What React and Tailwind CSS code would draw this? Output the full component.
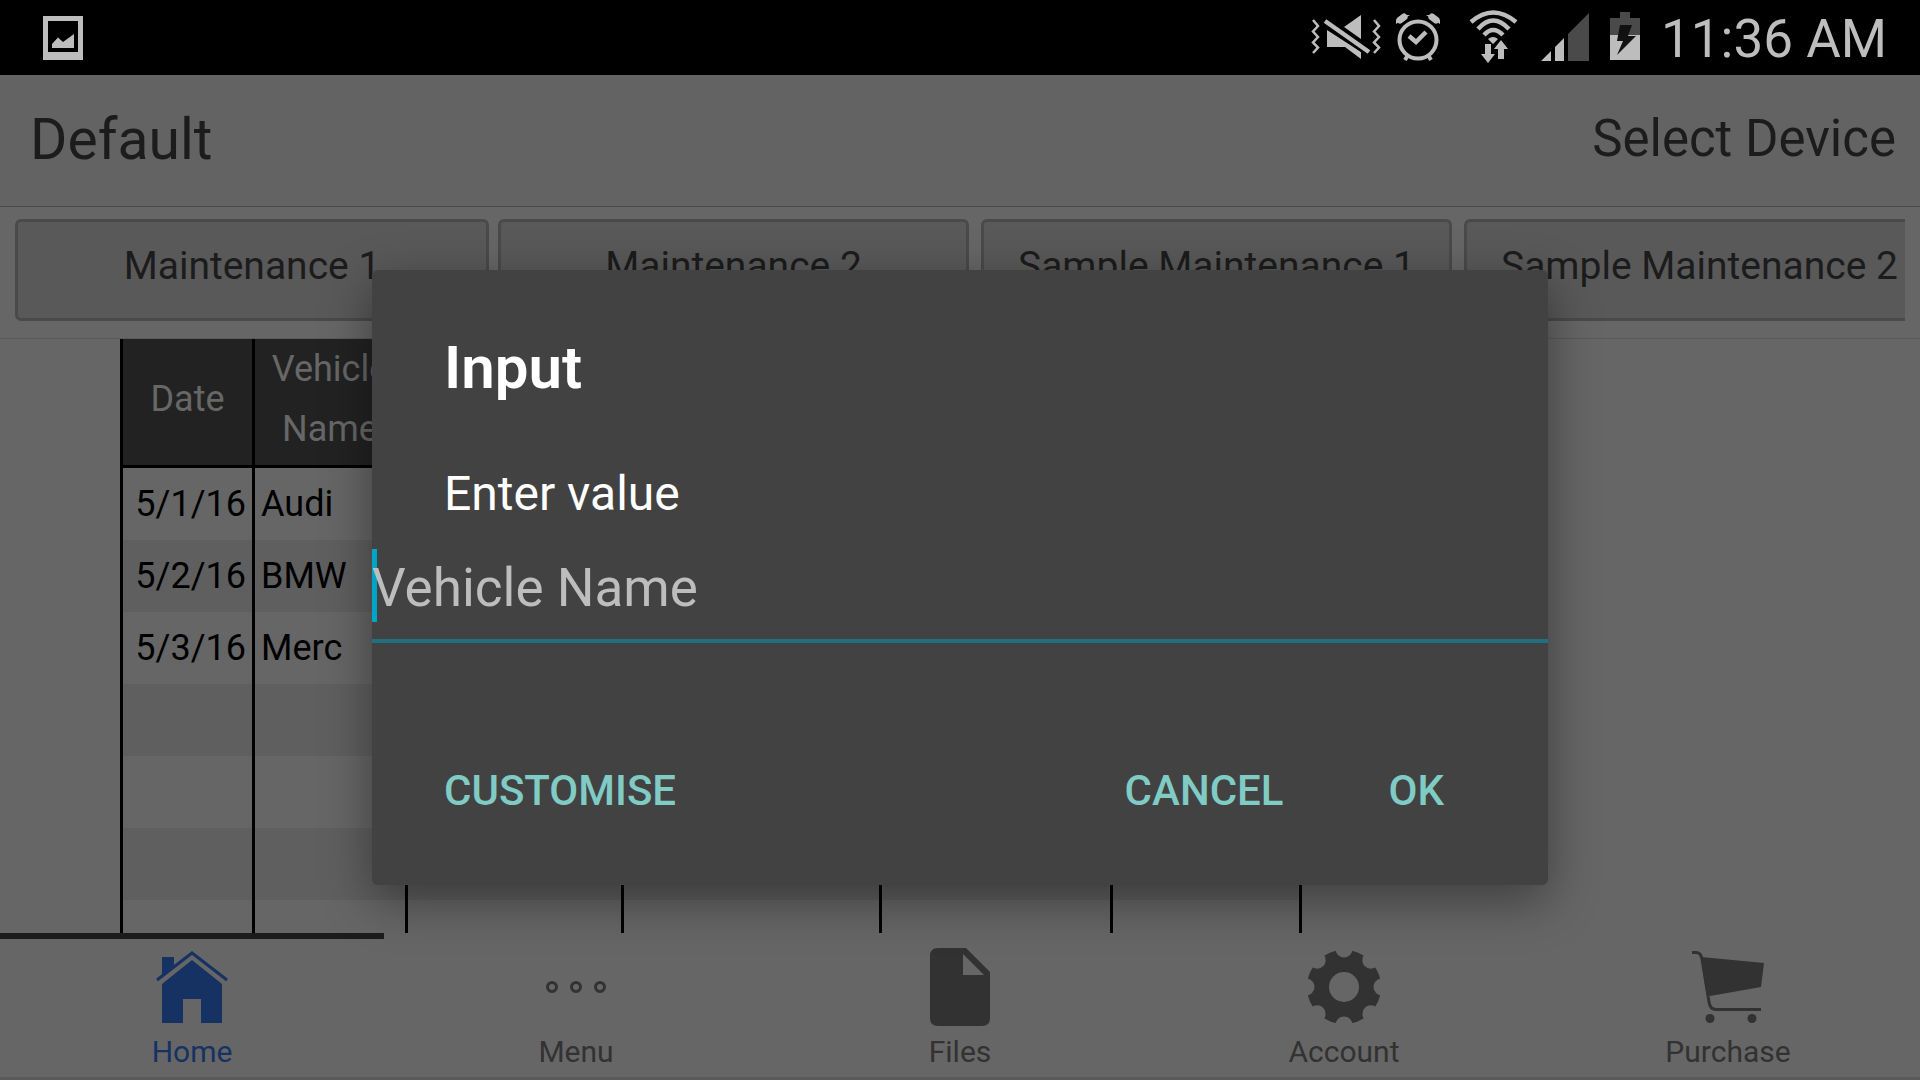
import { useState } from "react";

const BUTTONS = [
  { label: "Maintenance 1", size: "w-[474px] mr-[9px]" },
  { label: "Maintenance 2", size: "w-[471px] mr-3" },
  { label: "Sample Maintenance 1", size: "w-[471px] mr-3" },
  { label: "Sample Maintenance 2", size: "w-[471px] mr-3" },
];

const COLUMNS = [
  { title: "Date", width: "w-[132px]" },
  { title: "Vehicle Name", width: "w-[153px]" },
  { title: "", width: "w-[216px]" },
  { title: "", width: "w-[258px]" },
  { title: "", width: "w-[231px]" },
  { title: "", width: "w-[189px]" },
];

const ROWS = [
  ["5/1/16", "Audi"],
  ["5/2/16", "BMW"],
  ["5/3/16", "Merc"],
  [],
  [],
  [],
  [],
];

function StatusBar() {
  return (
    <div className="flex h-[75px] shrink-0 items-center justify-between bg-black pr-[33px] pl-[43px] text-[#bdbdbd]">
      <svg className="h-11 w-10" viewBox="0 0 40 44" fill="currentColor">
        <path fillRule="evenodd" d="M0 0H40V44H0ZM5 5V36H35V5Z" />
        <path d="M9 28L15 21.500L20 26L31 18V32H9Z" />
      </svg>
      <div className="flex items-center">
        <svg className="h-[75px] w-[345px]" viewBox="1305 0 345 75" fill="none">
          {/* muted, vibrating */}
          <g stroke="#bdbdbd" strokeWidth="2.500">
            <path d="M1314 20L1319 26L1314 31.500L1319 37L1314 42.500L1319 47.500L1314 53" />
            <path d="M1375 20L1380 26L1375 31.500L1380 37L1375 42.500L1380 47.500L1375 53" />
          </g>
          <path fill="#bdbdbd" d="M1345 27L1362 15V39ZM1328 30L1362 52V59L1346 47H1328Z" />
          <path d="M1326 21L1370 52" stroke="#000" strokeWidth="9" />
          <path d="M1326 21L1370 52" stroke="#bdbdbd" strokeWidth="4.500" />
          {/* alarm */}
          <circle cx="1419" cy="40" r="18.500" stroke="#bdbdbd" strokeWidth="4" />
          <path d="M1410 36L1417 42L1427 32" stroke="#bdbdbd" strokeWidth="4.500" />
          <path d="M1401 20L1405 17M1437 20L1433 17" stroke="#bdbdbd" strokeWidth="7" strokeLinecap="round" />
          <path d="M1397 20V24L1411 15H1404ZM1441 20V24L1427 15H1434Z" fill="#bdbdbd" />
          <path d="M1409 55L1406 60M1429 55L1432 60" stroke="#bdbdbd" strokeWidth="4" />
          {/* wifi */}
          <g stroke="#bdbdbd" strokeWidth="4.500">
            <path d="M1472 22Q1494 3 1517 22" />
            <path d="M1479 29Q1494 12 1510 29" />
            <path d="M1485 35Q1494 25 1504 35" />
          </g>
          <path fill="#bdbdbd" d="M1489 39Q1494 35 1499 39L1494 44ZM1486 44H1492V54H1496L1489 63L1482 54H1486ZM1499 59V49H1495L1502 40L1509 49H1505V59Z" />
          {/* signal */}
          <path fill="#bdbdbd" d="M1542 61L1552 51V61ZM1556 61V47L1565 38V61Z" />
          <path fill="#4a4a4a" d="M1569 61V34L1590 13V61Z" />
          {/* battery */}
          <path fill="#4a4a4a" d="M1611 35V18H1621V12H1631V18H1641V35Z" />
          <path fill="#bdbdbd" d="M1611 35H1641V60H1611Z" />
          <path fill="#111" d="M1621 25H1633L1629 36H1637L1618 55L1624 41H1618Z" />
        </svg>
        <span className="ml-3 pt-1 text-[53px] leading-[75px]">11:36 AM</span>
      </div>
    </div>
  );
}

function HomeIcon() {
  return (
    <svg className="h-[72px] w-[72px]" viewBox="0 0 72 72" fill="currentColor">
      <path d="M6 6H18V15L6 27Z" />
      <path d="M1 29L36 2L71 29" fill="none" stroke="currentColor" strokeWidth="3" />
      <path d="M36 9L66 33V72H45V48H27V72H6V33Z" />
    </svg>
  );
}

function MenuIcon() {
  return (
    <svg className="h-[72px] w-[72px]" viewBox="0 0 72 72" fill="none" stroke="currentColor" strokeWidth="3">
      <circle cx="12" cy="36" r="4.500" />
      <circle cx="36" cy="36" r="4.500" />
      <circle cx="60" cy="36" r="4.500" />
    </svg>
  );
}

function FilesIcon() {
  return (
    <svg className="h-[78px] w-[60px]" viewBox="0 0 60 78" fill="currentColor">
      <path fillRule="evenodd" d="M8 0H36L60 24V70Q60 78 52 78H8Q0 78 0 70V8Q0 0 8 0ZM33 6V27H54Z" />
    </svg>
  );
}

function GearIcon() {
  const notches = [0, 45, 90, 135, 180, 225, 270, 315];
  return (
    <svg className="h-[72px] w-[72px]" viewBox="0 0 72 72">
      <mask id="gear">
        <circle cx="36" cy="36" r="37" fill="white" />
        <circle cx="36" cy="36" r="15" fill="black" />
        {notches.map((angle) => (
          <circle key={angle} cx="36" cy="-2" r="8.500" fill="black" transform={`rotate(${angle} 36 36)`} />
        ))}
      </mask>
      <rect width="72" height="72" fill="currentColor" mask="url(#gear)" />
    </svg>
  );
}

function CartIcon() {
  return (
    <svg className="h-[72px] w-[72px]" viewBox="0 0 72 72" fill="currentColor">
      <path d="M0 1.500H4Q9 1.500 10 8L17 51Q18 58.500 24 58.500H69" fill="none" stroke="currentColor" strokeWidth="3" />
      <path d="M9 6L72 12L69 36L18 45L14 40Z" />
      <circle cx="18" cy="67.500" r="4.500" />
      <circle cx="60" cy="67.500" r="4.500" />
    </svg>
  );
}

const TABS = [
  { label: "Home", Icon: HomeIcon },
  { label: "Menu", Icon: MenuIcon },
  { label: "Files", Icon: FilesIcon },
  { label: "Account", Icon: GearIcon },
  { label: "Purchase", Icon: CartIcon },
];

function VehicleTable() {
  return (
    <table className="ml-[120px] table-fixed border-separate border-spacing-0 border-l-[3px] border-black text-4xl">
      <thead>
        <tr className="h-[129px] bg-[#222222] text-[#676767]">
          {COLUMNS.map((column, index) => (
            <th
              key={index}
              scope="col"
              className={`${column.width} border-r-[3px] border-b-[3px] border-black px-0 pt-0 pb-[6px] leading-[60px] font-normal`}
            >
              {column.title}
            </th>
          ))}
        </tr>
      </thead>
      <tbody>
        {ROWS.map((row, index) => (
          <tr key={index} className="h-[72px] even:bg-[#5f5f5f]">
            {COLUMNS.map((column, cell) => (
              <td
                key={cell}
                className="border-r-[3px] border-black px-[6px] py-0 leading-[72px] text-black first:text-right"
              >
                {row[cell]}
              </td>
            ))}
          </tr>
        ))}
      </tbody>
    </table>
  );
}

function InputDialog() {
  const [value, setValue] = useState("");

  return (
    <div
      role="dialog"
      aria-labelledby="dialog-title"
      className="w-[1176px] rounded-md bg-[#424242] shadow-[0_15px_50px_rgba(0,0,0,0.4)]"
    >
      <div className="px-[72px] pt-[62px] text-white">
        <h2 id="dialog-title" className="text-[60px] leading-[72px] font-semibold">Input</h2>
        <label htmlFor="dialog-value" className="mt-[60px] block text-5xl leading-[60px]">Enter value</label>
      </div>
      <div className="mt-[19px] flex h-[100px] items-start border-b-4 border-[#21707f] pt-[6px]">
        <div className="relative w-full">
          <span className="absolute inset-y-0 left-0 w-[5px] bg-[#00a4c7]" />
          <input
            id="dialog-value"
            type="text"
            value={value}
            onChange={(event) => setValue(event.target.value)}
            placeholder="Vehicle Name"
            className="relative block h-[73px] w-full bg-transparent pt-[6px] text-[53px] text-white outline-none placeholder:text-[#bdbdbd]"
          />
        </div>
      </div>
      <div className="flex items-center px-[72px] pt-[111px] pb-[58px] text-[42px] leading-[73px] font-medium text-[#80cbc4]">
        <button type="button">CUSTOMISE</button>
        <button type="button" className="ml-auto">CANCEL</button>
        <button type="button" className="mr-8 ml-[105px]">OK</button>
      </div>
    </div>
  );
}

export default function App() {
  return (
    <div className="relative flex h-screen flex-col overflow-hidden bg-[#666666] font-[Roboto,sans-serif]">
      <StatusBar />

      <header className="flex h-[132px] shrink-0 items-center justify-between border-b border-[#4a4a4a] bg-[#636363] pr-6 pb-[2px] pl-[30px] text-[#1c1c1c]">
        <h1 className="text-[57px]">Default</h1>
        <button type="button" className="text-[51px]">Select Device</button>
      </header>

      <div className="h-[132px] shrink-0 border-b border-[#5a5a5a] px-[15px] pt-3">
        <div className="flex overflow-hidden">
          {BUTTONS.map((button) => (
            <button
              key={button.label}
              type="button"
              className={`${button.size} h-[102px] shrink-0 rounded-md border-[3px] border-[#4a4a4a] bg-[#595959] pb-2 text-[39px] whitespace-nowrap text-[#1c1c1c]`}
            >
              {button.label}
            </button>
          ))}
        </div>
      </div>

      <main className="min-h-0 flex-1 overflow-hidden">
        <VehicleTable />
      </main>

      <nav className="flex h-[147px] shrink-0 border-b-[3px] border-[#5a5a5a]">
        {TABS.map(({ label, Icon }, index) => (
          <a
            key={label}
            href={`#${label.toLowerCase()}`}
            className={`flex flex-1 flex-col items-center border-t-[6px] ${
              index === 0 ? "border-[#1c1c1c] text-[#163263]" : "border-transparent text-[#323232]"
            }`}
          >
            <span className="flex h-24 items-center justify-center">
              <Icon />
            </span>
            <span className="text-[30px] leading-[34px]">{label}</span>
          </a>
        ))}
      </nav>

      <div className="absolute inset-0 flex items-center justify-center pt-[75px]">
        <InputDialog />
      </div>
    </div>
  );
}
